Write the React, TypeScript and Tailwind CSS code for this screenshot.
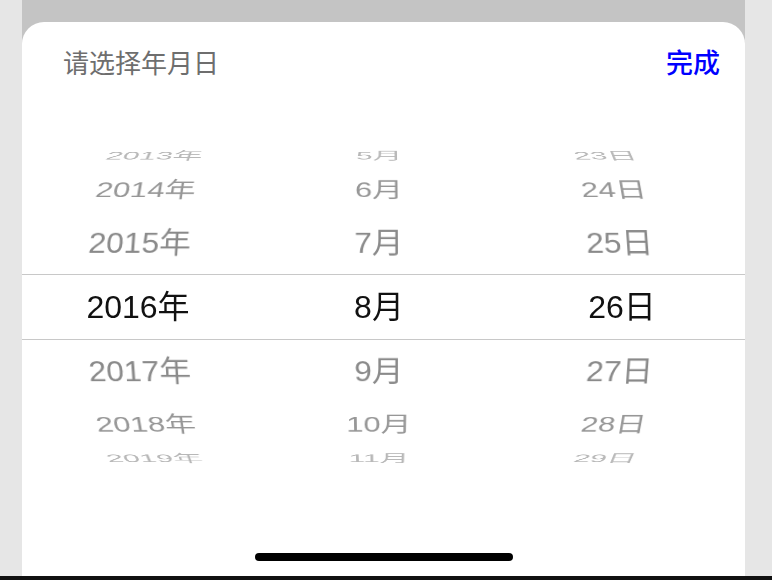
import type { CSSProperties } from "react";

const FONT = { fontFamily: '"Liberation Sans", "Noto Sans CJK SC", sans-serif' };

const STEP = 20.5;
const RADIUS = 185;

const TONES = ["text-[#111111]", "text-[#8a8a8a]", "text-[#979797]", "text-[#b8b8b8]", "text-[#c4c4c4]"];

interface WheelProps {
  items: string[];
  selected: number;
}

function Wheel({ items, selected }: WheelProps) {
  return (
    <div className="grid place-items-center [transform-style:preserve-3d]">
      {items.map((label, i) => {
        const k = i - selected;
        const angle = -k * STEP;
        if (Math.abs(angle) >= 90) return null;
        const style: CSSProperties = {
          transform: `translateZ(-${RADIUS}px) rotateX(${angle}deg) translateZ(${RADIUS}px)`,
        };
        return (
          <div
            key={label}
            style={style}
            className={`[grid-area:1/1] whitespace-nowrap text-[32px] leading-[40px] ${TONES[Math.abs(k)]}`}
          >
            {label}
          </div>
        );
      })}
    </div>
  );
}

const years = Array.from({ length: 9 }, (_, i) => `${2012 + i}年`);
const months = Array.from({ length: 9 }, (_, i) => `${4 + i}月`);
const days = Array.from({ length: 9 }, (_, i) => `${22 + i}日`);

export default function App() {
  return (
    <div className="flex h-[580px] w-[772px] flex-col bg-[#e6e6e6]" style={FONT}>
      <div className="ml-[22px] mr-[27px] flex flex-1 flex-col bg-[#c4c4c4]">
        <div className="h-[22px] shrink-0" />
        <div className="flex flex-1 flex-col rounded-t-[22px] bg-white">
          <div className="flex h-[85px] shrink-0 items-center justify-between pl-[41px] pr-[25px]">
            <span className="text-[26px] text-[#6e6e6e]">请选择年月日</span>
            <span className="text-[27px] font-medium text-[#0000ff]">完成</span>
          </div>

          <div className="mt-[32px] grid h-[336px] shrink-0 overflow-hidden">
            <div className="[grid-area:1/1] flex flex-col justify-center">
              <div className="h-[66px] border-y border-[#c8c8c8]" />
            </div>
            <div className="[grid-area:1/1] grid grid-cols-[232px_250px_236px] [perspective:1300px]">
              <Wheel items={years} selected={4} />
              <Wheel items={months} selected={4} />
              <Wheel items={days} selected={4} />
            </div>
          </div>

          <div className="flex flex-1 items-end justify-center pb-[15px]">
            <div className="h-[8px] w-[258px] rounded-full bg-black" />
          </div>
        </div>
      </div>
      <div className="h-[4px] shrink-0 bg-[#111111]" />
    </div>
  );
}
